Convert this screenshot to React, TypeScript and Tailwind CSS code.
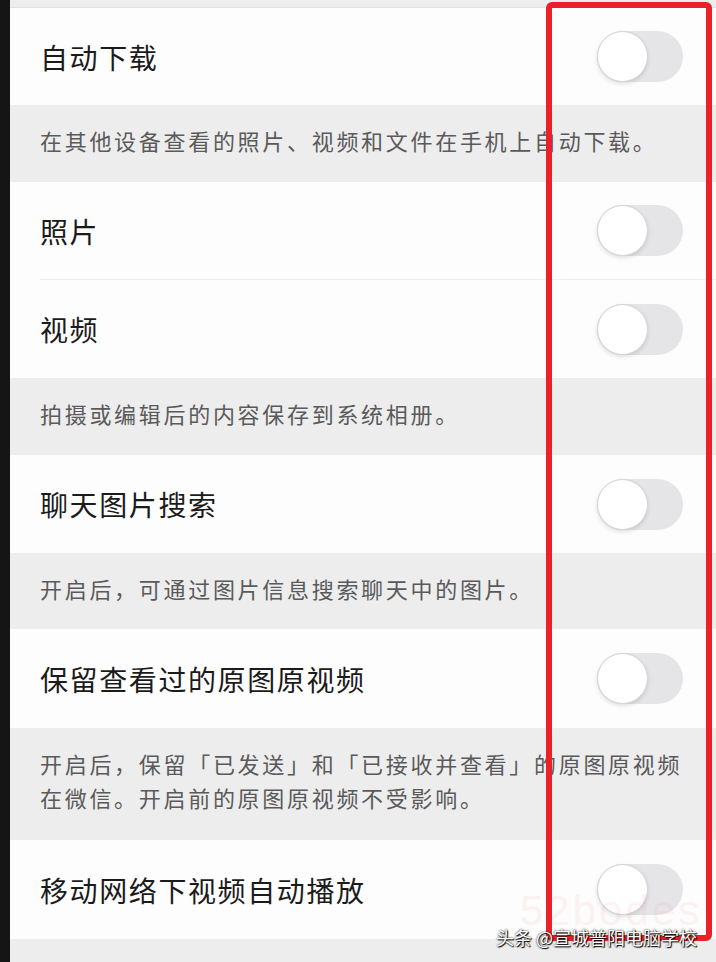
const font = '[font-family:"Noto_Sans_CJK_SC","Noto_Sans",sans-serif]';

function Toggle() {
  return (
    <div className="flex h-[51px] w-[86px] shrink-0 items-center rounded-full bg-[#e5e5e8]">
      <div className="h-[51px] w-[51px] rounded-full border border-[#d4d4d6] bg-white shadow-[0_2px_4px_rgba(0,0,0,0.12)]" />
    </div>
  );
}

function Row({ title, h }: { title: string; h: string }) {
  return (
    <div className={`flex shrink-0 items-center justify-between bg-[#fdfdfd] pl-[30px] pr-[33px] ${h}`}>
      <span className="text-[28px] leading-none tracking-[1.6px] text-[#1b1b1b]">{title}</span>
      <Toggle />
    </div>
  );
}

function Note({ lines, h }: { lines: string[]; h: string }) {
  return (
    <div className={`shrink-0 bg-[#ededee] pl-[30px] pr-[20px] pt-[18px] ${h}`}>
      {lines.map((l) => (
        <p key={l} className="whitespace-nowrap text-[22px] leading-[34px] tracking-[2.7px] text-[#5a5a5a]">
          {l}
        </p>
      ))}
    </div>
  );
}

export default function App() {
  return (
    <div className={`relative flex h-[962px] w-[716px] overflow-hidden bg-[#ededee] ${font}`}>
      {/* dark phone edge */}
      <div className="w-[10px] shrink-0 bg-[#151515]" />

      <div className="flex min-w-0 flex-1 flex-col">
        <div className="h-[8px] shrink-0 border-b border-[#e2e2e4] bg-[#ededee]" />
        <Row title="自动下载" h="h-[97px]" />
        <Note lines={['在其他设备查看的照片、视频和文件在手机上自动下载。']} h="h-[77px]" />
        <Row title="照片" h="h-[97px]" />
        <div className="flex h-px shrink-0 bg-[#fdfdfd] pl-[30px]">
          <div className="flex-1 bg-[#f0f0f1]" />
        </div>
        <Row title="视频" h="h-[98px]" />
        <Note lines={['拍摄或编辑后的内容保存到系统相册。']} h="h-[77px]" />
        <Row title="聊天图片搜索" h="h-[98px]" />
        <Note lines={['开启后，可通过图片信息搜索聊天中的图片。']} h="h-[76px]" />
        <Row title="保留查看过的原图原视频" h="h-[99px]" />
        <Note
          lines={['开启后，保留「已发送」和「已接收并查看」的原图原视频', '在微信。开启前的原图原视频不受影响。']}
          h="h-[112px]"
        />
        <Row title="移动网络下视频自动播放" h="h-[99px]" />
        <Note lines={['开启后，在移动网络下视频将自动播放。']} h="h-[60px]" />
      </div>

      {/* faint site watermark */}
      <div className="pointer-events-none absolute left-[520px] top-[890px] text-[42px] leading-none tracking-[3px] text-[#f0a0a0] opacity-[0.12] [font-family:'Liberation_Sans',sans-serif]">
        52bodes
      </div>

      {/* red highlight box */}
      <div className="pointer-events-none absolute left-[546px] top-[2px] h-[939px] w-[166px] rounded-[6px] border-[6px] border-[#ea2129]" />

      {/* source watermark */}
      <div className="pointer-events-none absolute left-[496px] top-[928px] text-[18px] leading-none text-white [text-shadow:0_0_2px_#000,1px_1px_1px_#000]">
        头条 @宣城普阳电脑学校
      </div>
    </div>
  );
}
